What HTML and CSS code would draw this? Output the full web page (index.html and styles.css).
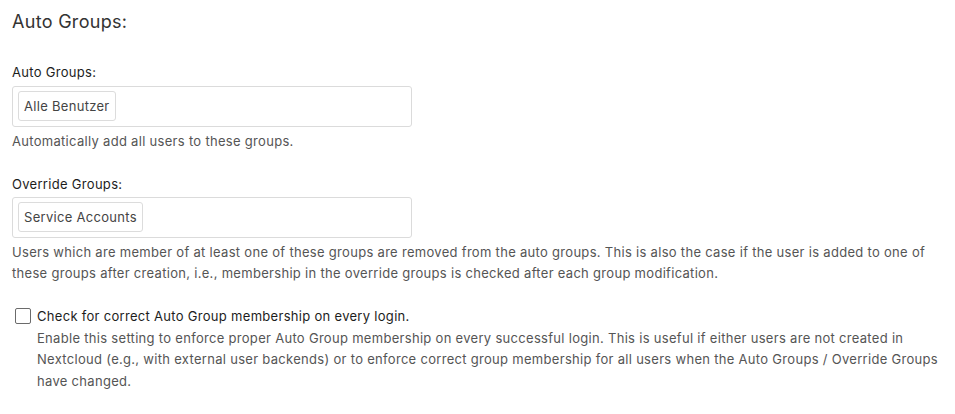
FILE: index.html
```html
<!DOCTYPE html>
<html>
<head>
<meta charset="utf-8">
<link rel="stylesheet" href="styles.css">
</head>
<body>
<div class="section">
  <h2 class="title">Auto Groups:</h2>

  <div class="field">
    <label class="label">Auto Groups:</label>
    <div class="select">
      <span class="tag">Alle Benutzer</span>
    </div>
    <p class="hint">Automatically add all users to these groups.</p>
  </div>

  <div class="field">
    <label class="label">Override Groups:</label>
    <div class="select">
      <span class="tag">Service Accounts</span>
    </div>
    <p class="hint">Users which are member of at least one of these groups are removed from the auto groups. This is also the case if the user is added to one of these groups after creation, i.e., membership in the override groups is checked after each group modification.</p>
  </div>

  <div class="check-row">
    <span class="checkbox"></span>
    <div class="check-text">
      <div class="check-label">Check for correct Auto Group membership on every login.</div>
      <p class="hint">Enable this setting to enforce proper Auto Group membership on every successful login. This is useful if either users are not created in Nextcloud (e.g., with external user backends) or to enforce correct group membership for all users when the Auto Groups / Override Groups have changed.</p>
    </div>
  </div>
</div>
</body>
</html>
```
FILE: styles.css
```css
* { box-sizing: border-box; }
html, body { margin: 0; padding: 0; background: #fff; }
body {
  font-family: Inter, "Liberation Sans", Arial, sans-serif;
  font-size: 13px;
  letter-spacing: 0.3px;
  color: #222;
}
.section {
  padding: 8px 12px 0 12px;
  width: 955px;
}
.title {
  margin: 0;
  font-size: 18px;
  font-weight: normal;
  color: #333;
  line-height: 28px;
}
.field { margin-top: 26px; }
.field + .field { margin-top: 22px; }
.label {
  display: block;
  line-height: 20px;
  color: #1d1d1d;
}
.select {
  margin-top: 3px;
  width: 400px;
  height: 41px;
  border: 1px solid #dbdbdb;
  border-radius: 3px;
  padding: 4px 5px;
  display: flex;
  align-items: flex-start;
}
.field:first-of-type .select { margin-top: 4px; }
.tag {
  display: inline-block;
  height: 30px;
  line-height: 28px;
  padding: 0 5px;
  border: 1px solid #dcdcdc;
  border-radius: 3px;
  color: #444;
}
.hint {
  margin: 4px 0 0 0;
  line-height: 21px;
  color: #555;
}
.select + .hint { margin-top: 4px; }
.check-row {
  margin-top: 22px;
  display: flex;
  align-items: flex-start;
  gap: 6px;
  padding-left: 3px;
}
.checkbox {
  flex: none;
  width: 16px;
  height: 16px;
  margin-top: 2px;
  border: 1px solid #6b6b6b;
  border-radius: 2px;
  background: #fff;
}
.check-label {
  line-height: 20px;
  color: #1d1d1d;
}
.check-text .hint { margin-top: 1.5px; line-height: 21.5px; }
```
